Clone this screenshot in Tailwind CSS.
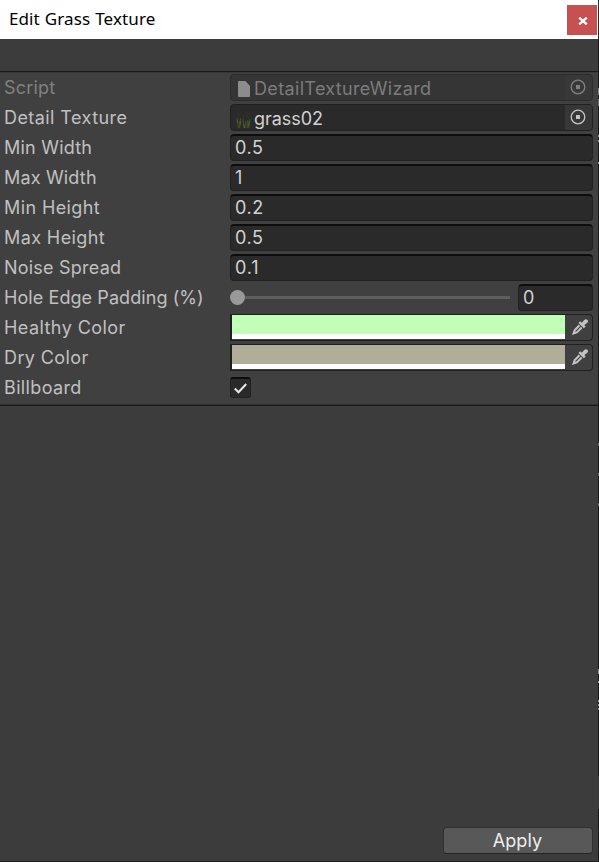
<!DOCTYPE html>
<html lang="en">
<head>
  <meta charset="UTF-8" />
  <meta name="viewport" content="width=device-width, initial-scale=1.0"/>
  <title>Edit Grass Texture</title>
  <script src="https://cdn.jsdelivr.net/npm/@tailwindcss/browser@4"></script>
</head>
<body class="bg-[#191919] h-[862px] overflow-hidden flex">
  <div class="w-[598px] h-full flex flex-col bg-[#3c3c3c] border-b border-[#202020] text-[18px] leading-[27px] tracking-[0.3px] text-[#c0c0c0] font-['Inter',sans-serif]">
    <!-- Title bar -->
    <header class="h-[39px] shrink-0 bg-white flex items-start justify-between pl-[9px] pr-px">
      <h1 class="text-[17px] leading-[38px] tracking-[0.1px] word-spacing-normal [word-spacing:0.5px] text-black font-['Noto_Sans',sans-serif]">Edit Grass Texture</h1>
      <button class="mt-[5px] w-[30px] h-[30px] bg-[#c75050] flex items-center justify-center" aria-label="Close">
        <svg class="w-[10px] h-[8px] ml-px mt-px" viewBox="0 0 10 8" fill="none" stroke="#fff" stroke-width="2.400"><path d="M1.200 .7l7.600 6.600M8.800 .7L1.200 7.300"/></svg>
      </button>
    </header>

    <!-- Inspector -->
    <main class="mt-8 h-[335px] shrink-0 bg-[#404040] border-t border-b border-[#1a1a1a] pt-[2px] pl-1 pr-[5px] flex flex-col gap-[3px] shadow-[inset_0_1px_0_#383838,inset_0_-1px_0_#303030]">
      <div class="flex h-[27px]">
        <span class="w-[226px] tracking-[0.2px] text-[#808080]">Script</span>
        <div class="flex-1 flex items-center rounded-[4px] border border-[#2c2c2c] bg-[#353535] text-[#7c7c7c] overflow-hidden">
          <svg class="ml-[7px] mt-[2px] w-[12px] h-[16px]" viewBox="0 0 12 16" fill="#8c8c8c"><path d="M1 0h6.500L12 5v10q0 1-1 1H1q-1 0-1-1V1q0-1 1-1z"/></svg>
          <span class="ml-[4px] mt-[2px] tracking-[0.340px]">DetailTextureWizard</span>
          <span class="ml-auto w-[27px] h-full bg-[#383838] flex items-center justify-center pr-[2px] pb-px">
            <svg class="w-4 h-4" viewBox="0 0 16 16" fill="none" stroke="#808080" stroke-width="1.300"><circle cx="8" cy="8" r="6.800"/><path d="M6 6h4v4H6z" fill="#808080" stroke="none"/></svg>
          </span>
        </div>
      </div>
      <div class="flex h-[27px]">
        <span class="w-[226px] tracking-[0.430px]">Detail Texture</span>
        <div class="flex-1 flex items-center rounded-[4px] border border-[#202020] bg-[#2a2a2a] text-[#d2d2d2] overflow-hidden">
          <svg class="ml-[5px] mt-[5px] w-[15px] h-[17px]" viewBox="0 0 15 17" fill="none" stroke="#3f4825" stroke-width="1.300"><path d="M1 6l1.500 10M4.500 6L3.500 16M7 7l1 9M9.500 9l.5 7M11.500 8v8M14 7l-1.500 9"/><path d="M1 8l1 3M4.500 9l-.5 4M7.500 12l1 4M13.500 9l-1 5" stroke="#505c28" stroke-width="1.300"/><path d="M2.500 1v6M11 0v6M7.500 3v4M13.500 3v3" stroke="#2f3426"/></svg>
          <span class="ml-[3px] mt-[2px] tracking-[-0.050px]">grass02</span>
          <span class="ml-auto w-[27px] h-full bg-[#373737] flex items-center justify-center pr-[2px] pb-px">
            <svg class="w-4 h-4" viewBox="0 0 16 16" fill="none" stroke="#c4c4c4" stroke-width="1.300"><circle cx="8" cy="8" r="6.800"/><path d="M6 6h4v4H6z" fill="#c4c4c4" stroke="none"/></svg>
          </span>
        </div>
      </div>
      <div class="flex h-[27px]">
        <span class="w-[226px] tracking-[0.220px]">Min Width</span>
        <div class="flex-1 rounded-[4px] border border-[#212121] border-t-2 border-t-[#0d0d0d] bg-[#2a2a2a] text-[#d2d2d2] pl-1 leading-[23px] tracking-[0.6px]">0.5</div>
      </div>
      <div class="flex h-[27px]">
        <span class="w-[226px] tracking-[0.170px]">Max Width</span>
        <div class="flex-1 rounded-[4px] border border-[#212121] border-t-2 border-t-[#0d0d0d] bg-[#2a2a2a] text-[#d2d2d2] pl-1 leading-[23px] tracking-[0.6px]">1</div>
      </div>
      <div class="flex h-[27px]">
        <span class="w-[226px] tracking-[0.4px]">Min Height</span>
        <div class="flex-1 rounded-[4px] border border-[#212121] border-t-2 border-t-[#0d0d0d] bg-[#2a2a2a] text-[#d2d2d2] pl-1 leading-[23px] tracking-[0.6px]">0.2</div>
      </div>
      <div class="flex h-[27px]">
        <span class="w-[226px] tracking-[0.4px]">Max Height</span>
        <div class="flex-1 rounded-[4px] border border-[#212121] border-t-2 border-t-[#0d0d0d] bg-[#2a2a2a] text-[#d2d2d2] pl-1 leading-[23px] tracking-[0.6px]">0.5</div>
      </div>
      <div class="flex h-[27px]">
        <span class="w-[226px] tracking-[0.220px]">Noise Spread</span>
        <div class="flex-1 rounded-[4px] border border-[#212121] border-t-2 border-t-[#0d0d0d] bg-[#2a2a2a] text-[#d2d2d2] pl-1 leading-[23px] tracking-[0.9px]">0.1</div>
      </div>
      <div class="flex h-[27px]">
        <span class="w-[226px] tracking-[0.080px]">Hole Edge Padding (%)</span>
        <div class="flex-1 flex items-center">
          <span class="w-[15px] h-[15px] rounded-full bg-[#999999]"></span>
          <span class="w-[265px] h-[3px] bg-[#5e5e5e]"></span>
          <div class="ml-auto w-[75px] h-[27px] rounded-[4px] border border-[#212121] border-t-2 border-t-[#0d0d0d] bg-[#2a2a2a] text-[#d2d2d2] pl-1 leading-[23px]">0</div>
        </div>
      </div>
      <div class="flex h-[27px]">
        <span class="w-[226px] tracking-[0.430px]">Healthy Color</span>
        <div class="flex-1 flex rounded-r-[4px] border border-l-2 border-[#202020] bg-[#404040]">
          <div class="w-[333px] h-6 bg-[#c1feb7] border-b-[5px] border-white"></div>
          <svg class="ml-[7px] mt-[4px] w-[16px] h-[16px]" viewBox="0 0 16 16"><path d="M9.800 3.800L12 1.200q1.700-1.800 3.300-.4t-.3 3.300l-2.600 2 1.200 1.300-1.800 1.800L6.500 3.900 8.200 2.200z" fill="#c4c4c4"/><path d="M7.500 6.300L2.600 11.200 1.900 14.100l2.900-.7 4.900-4.900" fill="none" stroke="#c4c4c4" stroke-width="2"/><path d="M1.500 12l2.500 2.500L0 16z" fill="#c4c4c4"/></svg>
        </div>
      </div>
      <div class="flex h-[27px]">
        <span class="w-[226px] tracking-[0.4px]">Dry Color</span>
        <div class="flex-1 flex rounded-r-[4px] border border-l-2 border-[#202020] bg-[#404040]">
          <div class="w-[333px] h-6 bg-[#b0ad98] border-b-[5px] border-white"></div>
          <svg class="ml-[7px] mt-[4px] w-[16px] h-[16px]" viewBox="0 0 16 16"><path d="M9.800 3.800L12 1.200q1.700-1.800 3.300-.4t-.3 3.300l-2.600 2 1.200 1.300-1.800 1.800L6.500 3.900 8.200 2.200z" fill="#c4c4c4"/><path d="M7.500 6.300L2.600 11.200 1.900 14.100l2.900-.7 4.900-4.900" fill="none" stroke="#c4c4c4" stroke-width="2"/><path d="M1.500 12l2.500 2.500L0 16z" fill="#c4c4c4"/></svg>
        </div>
      </div>
      <div class="flex h-[27px]">
        <span class="w-[226px] tracking-[0.350px]">Billboard</span>
        <div class="mt-[3px] w-[21px] h-[21px] rounded-[3px] border border-[#212121] border-t-2 border-t-[#0d0d0d] bg-[#2a2a2a] flex items-center justify-center">
          <svg class="w-[13px] h-[11px]" viewBox="0 0 13 11" fill="none" stroke="#e8e8e8" stroke-width="2"><path d="M.8 5.500l3.700 3.700L12.200 1"/></svg>
        </div>
      </div>
    </main>

    <!-- Wizard button -->
    <footer class="mt-auto mb-[7px] pr-[5px] flex justify-end">
      <button class="w-[150px] h-[27px] rounded-[4px] border border-[#303030] border-b-[#242424] bg-[#585858] text-[#eeeeee] text-center leading-[25px] tracking-[0.1px] pr-px">Apply</button>
    </footer>
  </div>
  <!-- Sliver of the window behind -->
  <div class="w-px h-full flex flex-col">
    <div class="h-[39px] bg-[#2a2a2a]"></div>
    <div class="mt-[49px] h-[7px] bg-[#808080]"></div>
    <div class="mt-[4px] h-[7px] bg-[#686868]"></div>
    <div class="mt-[29px] h-[2px] bg-[#909090]"></div>
    <div class="mt-[3px] h-[2px] bg-[#909090]"></div>
    <div class="mt-[20px] h-[2px] bg-[#909090]"></div>
    <div class="mt-[279px] h-[3px] bg-[#606060]"></div>
    <div class="mt-[27px] h-[3px] bg-[#606060]"></div>
    <div class="mt-[27px] h-[3px] bg-[#606060]"></div>
    <div class="mt-[163px] h-[5px] bg-[#909090]"></div>
    <div class="mt-[7px] h-[2px] bg-[#909090]"></div>
    <div class="mt-[17px] h-[2px] bg-[#909090]"></div>
    <div class="mt-[2px] h-[2px] bg-[#909090]"></div>
    <div class="mt-[2px] h-[2px] bg-[#909090]"></div>
    <div class="mt-[66px] h-[33px] bg-[#383838]"></div>
  </div>
</body>
</html>
